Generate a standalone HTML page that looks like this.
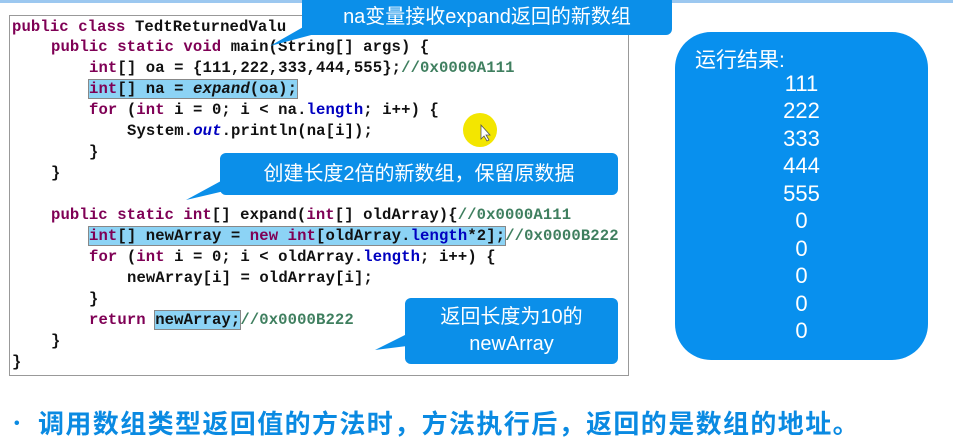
<!DOCTYPE html>
<html><head><meta charset="utf-8"><style>
*{margin:0;padding:0;box-sizing:border-box}
body{width:953px;height:447px;background:#fff;position:relative;overflow:hidden;font-family:"Liberation Sans","Noto Sans CJK SC",sans-serif}
.topbar{position:absolute;left:0;top:0;width:953px;height:3px;background:#9cc8f0}
.code{position:absolute;left:9px;top:15px;width:620px;height:361px;border:1px solid #999;background:#fff}
.l{position:absolute;font-family:"Liberation Mono",monospace;font-size:15.6px;font-weight:bold;color:#111;white-space:pre;line-height:19px;letter-spacing:0.1px}
.k{color:#7f0055}.c{color:#3f7f5f}.f{color:#0000c0}.i{font-style:italic}
.hl{background:#8cd3f5;outline:1px solid #888}
.bub{position:absolute;background:#0b8fe9;color:#fff;border-radius:6px;font-size:20px;text-align:center}
.res{position:absolute;left:675px;top:32px;width:253px;height:328px;background:#0890ee;border-radius:36px;color:#fff}
.n{position:absolute;left:0;width:253px;text-align:center;font-size:22px;line-height:26px}
</style></head><body>
<div class="topbar"></div>
<div class="code"></div>
<div class="l" style="left:12px;top:18px"><span class="k">public class</span> TedtReturnedValu</div>
<div class="l" style="left:51px;top:38px"><span class="k">public static void</span> main(String[] args) {</div>
<div class="l" style="left:89px;top:59px"><span class="k">int</span>[] oa = {111,222,333,444,555};<span class="c">//0x0000A111</span></div>
<div class="l" style="left:89px;top:80px"><span class="hl"><span class="k">int</span>[] na = <span class="i">expand</span>(oa);</span></div>
<div class="l" style="left:89px;top:101px"><span class="k">for</span> (<span class="k">int</span> i = 0; i &lt; na.<span class="f">length</span>; i++) {</div>
<div class="l" style="left:127px;top:122px">System.<span class="f i">out</span>.println(na[i]);</div>
<div class="l" style="left:89px;top:143px">}</div>
<div class="l" style="left:51px;top:164px">}</div>
<div class="l" style="left:51px;top:206px"><span class="k">public static int</span>[] expand(<span class="k">int</span>[] oldArray){<span class="c">//0x0000A111</span></div>
<div class="l" style="left:89px;top:227px"><span class="hl"><span class="k">int</span>[] newArray = <span class="k">new int</span>[oldArray.<span class="f">length</span>*2];</span><span class="c">//0x0000B222</span></div>
<div class="l" style="left:89px;top:248px"><span class="k">for</span> (<span class="k">int</span> i = 0; i &lt; oldArray.<span class="f">length</span>; i++) {</div>
<div class="l" style="left:127px;top:269px">newArray[i] = oldArray[i];</div>
<div class="l" style="left:89px;top:290px">}</div>
<div class="l" style="left:89px;top:311px"><span class="k">return</span> <span class="hl">newArray;</span><span class="c">//0x0000B222</span></div>
<div class="l" style="left:51px;top:332px">}</div>
<div class="l" style="left:12px;top:353px">}</div>

<svg style="position:absolute;left:0;top:0" width="953" height="447">
<circle cx="480" cy="130" r="17" fill="#f3e600"/>
<path d="M481 125 L481 139 L484 136 L487 141 L489 140 L486 135 L490 135 Z" fill="#fff" stroke="#555" stroke-width="0.8"/>
<polygon points="312,22 270,46 330,30" fill="#0b8fe9"/>
<polygon points="232,175 186,200 250,185" fill="#0b8fe9"/>
<polygon points="415,330 375,350 415,345" fill="#0b8fe9"/>
</svg>
<div class="bub" style="left:302px;top:-5px;width:370px;height:40px;line-height:44px">na变量接收expand返回的新数组</div>
<div class="bub" style="left:220px;top:153px;width:398px;height:42px;line-height:42px">创建长度2倍的新数组，保留原数据</div>
<div class="bub" style="left:405px;top:298px;width:213px;height:66px;line-height:27px;padding-top:6px">返回长度为10的<br>newArray</div>

<div class="res">
<div style="position:absolute;left:20px;top:12px;font-size:21px">运行结果:</div>
<div class="n" style="top:39px">111</div>
<div class="n" style="top:66px">222</div>
<div class="n" style="top:94px">333</div>
<div class="n" style="top:121px">444</div>
<div class="n" style="top:149px">555</div>
<div class="n" style="top:176px">0</div>
<div class="n" style="top:204px">0</div>
<div class="n" style="top:231px">0</div>
<div class="n" style="top:259px">0</div>
<div class="n" style="top:286px">0</div>
</div>

<div style="position:absolute;left:14px;top:415px;font-size:16px;font-weight:bold;color:#0a8ae2">•</div>
<div style="position:absolute;left:38px;top:409px;font-size:26px;font-weight:bold;color:#0a8ae2;white-space:nowrap;letter-spacing:1.4px;line-height:30px">调用数组类型返回值的方法时，方法执行后，返回的是数组的地址。</div>
</body></html>
